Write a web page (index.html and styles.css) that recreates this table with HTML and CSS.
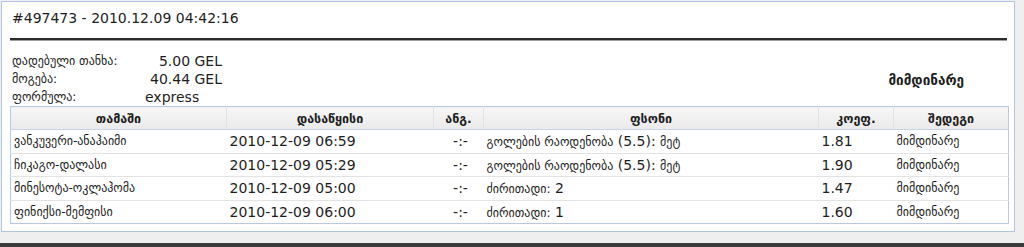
FILE: index.html
```html
<!DOCTYPE html>
<html>
<head>
<meta charset="utf-8">
<link rel="stylesheet" href="styles.css">
</head>
<body>
<div class="panel">
  <div class="title">#497473 - 2010.12.09 04:42:16</div>
  <div class="rule"></div>
  <div class="info">
    <div class="facts">
      <span class="ka">დადებული თანხა:</span><span class="val num">5.00 GEL</span>
      <span class="ka">მოგება:</span><span class="val num">40.44 GEL</span>
      <span class="ka">ფორმულა:</span><span class="val">express</span>
    </div>
    <div class="status ka">მიმდინარე</div>
  </div>
  <table class="bets">
    <colgroup>
      <col class="c1"><col class="c2"><col class="c3"><col class="c4"><col class="c5"><col class="c6">
    </colgroup>
    <thead>
      <tr>
        <th class="ka">თამაში</th>
        <th class="ka">დასაწყისი</th>
        <th class="ka">ანგ.</th>
        <th class="ka">ფსონი</th>
        <th class="ka">კოეფ.</th>
        <th class="ka">შედეგი</th>
      </tr>
    </thead>
    <tbody>
      <tr>
        <td class="ka">ვანკუვერი-ანაჰაიმი</td>
        <td>2010-12-09 06:59</td>
        <td class="mid">-:-</td>
        <td><span class="ka">გოლების რაოდენობა</span> (5.5): <span class="ka">მეტ</span></td>
        <td>1.81</td>
        <td class="ka">მიმდინარე</td>
      </tr>
      <tr>
        <td class="ka">ჩიკაგო-დალასი</td>
        <td>2010-12-09 05:29</td>
        <td class="mid">-:-</td>
        <td><span class="ka">გოლების რაოდენობა</span> (5.5): <span class="ka">მეტ</span></td>
        <td>1.90</td>
        <td class="ka">მიმდინარე</td>
      </tr>
      <tr>
        <td class="ka">მინესოტა-ოკლაჰომა</td>
        <td>2010-12-09 05:00</td>
        <td class="mid">-:-</td>
        <td><span class="ka">ძირითადი:</span> 2</td>
        <td>1.47</td>
        <td class="ka">მიმდინარე</td>
      </tr>
      <tr>
        <td class="ka">ფინიქსი-მემფისი</td>
        <td>2010-12-09 06:00</td>
        <td class="mid">-:-</td>
        <td><span class="ka">ძირითადი:</span> 1</td>
        <td>1.60</td>
        <td class="ka">მიმდინარე</td>
      </tr>
    </tbody>
  </table>
</div>
<div class="footer"></div>
</body>
</html>
```

FILE: styles.css
```css
html, body {
  margin: 0;
  padding: 0;
}
body {
  background: #efefef;
  font-family: "DejaVu Sans", sans-serif;
  font-size: 14px;
  color: #1e1e1e;
  width: 1024px;
  height: 247px;
  overflow: hidden;
  position: relative;
}
.ka {
  font-size: 12px;
}
.panel {
  margin: 1px 0 0 1px;
  width: 1014px;
  height: 231px;
  box-sizing: border-box;
  border: 1px solid #b3c4e2;
  background: #fff;
  padding: 8px 7px 0 8px;
}
.title {
  line-height: 17px;
  padding-left: 2px;
}
.rule {
  margin-top: 11px;
  height: 2px;
  background: #2b2b2b;
  box-shadow: 0 1px 0 #a0a0a0;
}
.info {
  display: flex;
  align-items: center;
  justify-content: space-between;
  margin-top: 12px;
  height: 54px;
}
.facts {
  display: grid;
  grid-template-columns: 133px 77px;
  line-height: 18px;
  padding-left: 2px;
}
.val {
  font-size: 14px;
}
.val.num {
  text-align: right;
}
.status {
  font-weight: bold;
  font-size: 13.5px;
  padding-right: 43px;
  padding-top: 2px;
}
.bets {
  width: 998px;
  border-collapse: collapse;
  table-layout: fixed;
  border: 1px solid #b9c9e4;
}
.c1 { width: 216px; }
.c2 { width: 207px; }
.c3 { width: 50px; }
.c4 { width: 335px; }
.c5 { width: 75px; }
.c6 { width: 115px; }
.bets th {
  height: 22px;
  padding: 0;
  font-weight: bold;
  font-size: 12.5px;
  text-align: center;
  background: linear-gradient(#f6f6f6, #eaeaea);
  border-left: 1px solid #dfe3ea;
  border-bottom: 1px solid #c8d4e8;
}
.bets th:first-child {
  border-left: none;
}
.bets td {
  height: 22.5px;
  padding: 0 0 0 3px;
  text-align: left;
  white-space: nowrap;
  border-bottom: 1px solid #e3e3e3;
}
.bets tbody tr:last-child td {
  border-bottom: none;
}
.bets td.mid {
  text-align: center;
  padding: 0 0 0 4px;
}
.footer {
  position: absolute;
  left: 0;
  right: 0;
  bottom: 0;
  height: 4px;
  background: #3a3a3a;
}
```
